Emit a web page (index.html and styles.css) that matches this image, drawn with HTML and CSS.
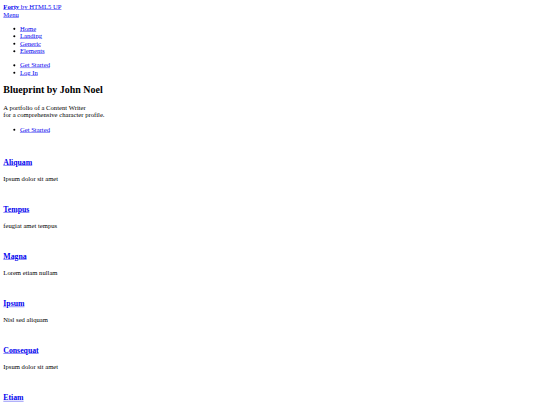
FILE: index.html
```
<!DOCTYPE html>
<html>
<head>
<meta charset="utf-8">
<title>Blueprint by John Noel</title>
<link rel="stylesheet" href="styles.css">
</head>
<body class="body">
<div class="wrapper">
  <header class="site-header">
    <a href="#" class="logo"><strong>Forty</strong> <span>by HTML5 UP</span></a>
    <nav><a href="#menu">Menu</a></nav>
  </header>
  <nav class="menu">
    <ul class="list">
      <li><a href="#">Home</a></li>
      <li><a href="#">Landing</a></li>
      <li><a href="#">Generic</a></li>
      <li><a href="#">Elements</a></li>
    </ul>
    <ul class="list">
      <li><a href="#">Get Started</a></li>
      <li><a href="#">Log In</a></li>
    </ul>
  </nav>
  <section class="banner">
    <header class="major"><h1 class="title">Blueprint by John Noel</h1></header>
    <div class="content">
      <p class="text">A portfolio of a Content Writer<br>for a comprehensive character profile.</p>
      <ul class="list"><li><a href="#one">Get Started</a></li></ul>
    </div>
  </section>
  <div class="main">
    <section class="tiles">
      <article><span class="image"></span><header><h3 class="tile-title"><a href="#">Aliquam</a></h3><p class="text">Ipsum dolor sit amet</p></header></article>
      <article><span class="image"></span><header><h3 class="tile-title"><a href="#">Tempus</a></h3><p class="text">feugiat amet tempus</p></header></article>
      <article><span class="image"></span><header><h3 class="tile-title"><a href="#">Magna</a></h3><p class="text">Lorem etiam nullam</p></header></article>
      <article><span class="image"></span><header><h3 class="tile-title"><a href="#">Ipsum</a></h3><p class="text">Nisl sed aliquam</p></header></article>
      <article><span class="image"></span><header><h3 class="tile-title"><a href="#">Consequat</a></h3><p class="text">Ipsum dolor sit amet</p></header></article>
      <article><span class="image"></span><header><h3 class="tile-title"><a href="#">Etiam</a></h3><p class="text">Feugiat amet tempus</p></header></article>
    </section>
  </div>
</div>
</body>
</html>
```
FILE: styles.css
```
html {
  background: #fff;
}
.body {
  margin: 0;
  overflow: hidden;
  height: 405px;
}
.wrapper {
  width: 1285px;
  padding: 8px;
  transform: scale(0.415);
  transform-origin: 0 0;
  font-family: "Liberation Serif", "Times New Roman", serif;
  font-size: 16px;
  color: #000;
}
a {
  color: #0000ee;
}
.list {
  margin: 16px 0;
  padding-left: 40px;
}
.text {
  margin: 16px 0;
}
.title {
  font-size: 24px;
  margin: 19.92px 0;
}
.tiles {
  padding-top: 5px;
}
.tile-title {
  font-size: 18.72px;
  margin: 18.72px 0;
}
.image {
  display: block;
  height: 20px;
}
```
